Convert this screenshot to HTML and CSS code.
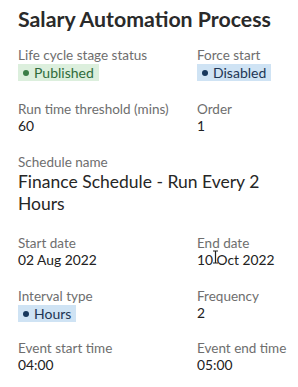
FILE: index.html
```html
<!DOCTYPE html>
<html lang="en">
<head>
    <meta charset="UTF-8">
    <meta name="viewport" content="width=device-width, initial-scale=1.0">
    <title>Salary Automation Process</title>
    <link rel="stylesheet" href="styles.css">
</head>
<body>
    <div class="panel">
        <h1 class="title">Salary Automation Process</h1>

        <div class="grid">
            <div class="field">
                <div class="label">Life cycle stage status</div>
                <span class="badge badge-green"><span class="dot"></span>Published</span>
            </div>
            <div class="field">
                <div class="label">Force start</div>
                <span class="badge badge-blue"><span class="dot"></span>Disabled</span>
            </div>

            <div class="field">
                <div class="label">Run time threshold (mins)</div>
                <div class="value">60</div>
            </div>
            <div class="field">
                <div class="label">Order</div>
                <div class="value">1</div>
            </div>

            <div class="field wide">
                <div class="label">Schedule name</div>
                <div class="value big">Finance Schedule - Run Every 2 Hours</div>
            </div>

            <div class="field">
                <div class="label">Start date</div>
                <div class="value">02 Aug 2022</div>
            </div>
            <div class="field cursor-host">
                <div class="label">End date</div>
                <div class="value">10 Oct 2022</div>
                <!-- text cursor over the value -->
                <svg class="ibeam" width="7" height="14" viewBox="0 0 7 14">
                    <path d="M1 1h5M3.5 1v12M1 13h5" stroke="#222" stroke-width="1.2" fill="none"/>
                </svg>
            </div>

            <div class="field">
                <div class="label">Interval type</div>
                <span class="badge badge-blue"><span class="dot"></span>Hours</span>
            </div>
            <div class="field">
                <div class="label">Frequency</div>
                <div class="value">2</div>
            </div>

            <div class="field last">
                <div class="label">Event start time</div>
                <div class="value">04:00</div>
            </div>
            <div class="field last">
                <div class="label">Event end time</div>
                <div class="value">05:00</div>
            </div>
        </div>
    </div>
</body>
</html>
```

FILE: styles.css
```css
body {
    margin: 0;
    background-color: #ffffff;
    font-family: Lato, "Open Sans", sans-serif;
    color: #222222;
}

.panel {
    padding: 6px 10px 0 18px;
}

.title {
    margin: 0 0 15px 0;
    font-size: 21.3px;
    font-weight: 700;
    line-height: 26px;
    color: #2a2a2a;
}

.grid {
    display: grid;
    grid-template-columns: 179px 1fr;
    row-gap: 20px;
}

.field {
    display: flex;
    flex-direction: column;
    align-items: flex-start;
}

.field.wide {
    grid-column: 1 / 3;
}

.field.last {
    margin-top: -2px;
}

.label {
    font-size: 13.5px;
    line-height: 16px;
    color: #6e6e6e;
}

.value {
    font-size: 13.8px;
    line-height: 17px;
    color: #222222;
}

.value.big {
    font-size: 17.5px;
    line-height: 22px;
    margin-top: 1px;
    color: #262626;
}

.badge {
    display: inline-flex;
    align-items: center;
    gap: 5px;
    height: 17px;
    padding: 0 5px;
    margin-top: 1px;
    font-size: 14px;
}

.dot {
    width: 6px;
    height: 6px;
    border-radius: 50%;
}

.badge-green {
    background-color: #dcefdd;
    color: #2f6b3b;
}
.badge-green .dot {
    background-color: #3b7d47;
}

.badge-blue {
    background-color: #cfe3f4;
    color: #1d3553;
}
.badge-blue .dot {
    background-color: #17375c;
}

/* mouse cursor sitting on the end date */
.cursor-host {
    position: relative;
}

.ibeam {
    position: absolute;
    left: 15px;
    top: 15px;
}
```
